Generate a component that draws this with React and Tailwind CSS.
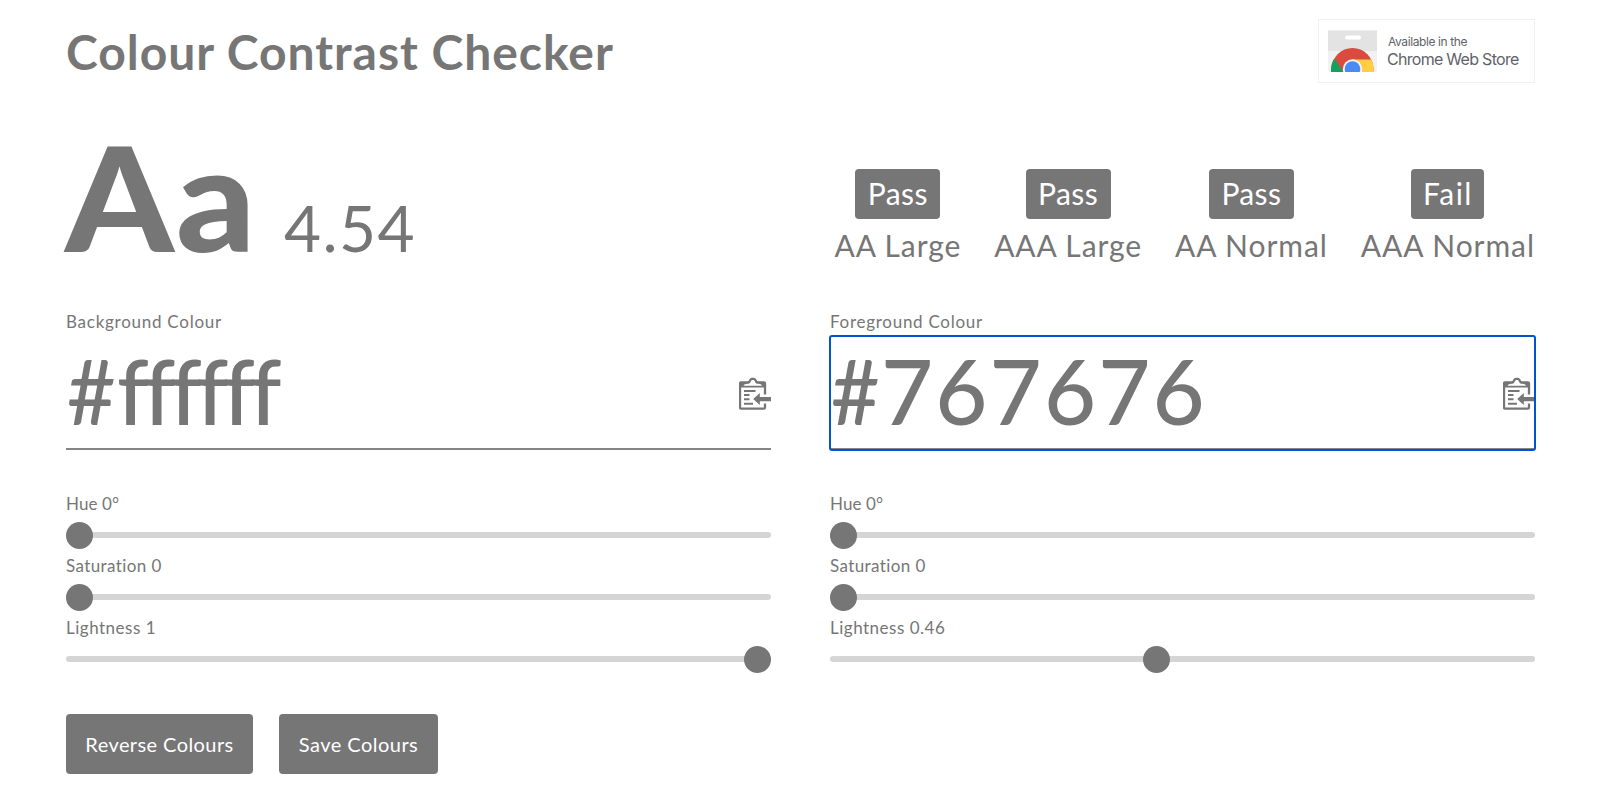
function PasteIcon() {
  return (
    <svg className="mt-[3px] -mb-px h-[34px] w-8" viewBox="0 0 32 34" fill="none" stroke="currentColor">
      <path d="M26 19V6.5a1.2 1.2 0 0 0-1.2-1.2H2.2A1.2 1.2 0 0 0 1 6.500V30.500a1.200 1.200 0 0 0 1.200 1.200H24.800a1.200 1.200 0 0 0 1.200-1.200V26.500" strokeWidth="2.300" />
      <path d="M1 5H7.500C9.500 5 9.500 3.800 10.200 2.800C11.200.2 16.500.2 17.500 2.800C18.200 3.800 18.200 5 20 5H26.500V10.400H1Z" fill="currentColor" stroke="none" />
      <path d="M4.500 8.800C4.800 7.500 6.500 6.800 8.500 6.800C10.600 6.800 11.500 5.600 11.900 4.200C12.400 2.600 15.300 2.600 15.800 4.200C16.200 5.600 17.100 6.800 19.200 6.800C21.200 6.800 22.700 7.500 23 8.800Z" fill="white" stroke="none" />
      <path d="M5 13.900h11.500M5 17.900h5.500M5 22.200h5.500M5 26.800h9" strokeWidth="2" />
      <rect x="24.500" y="17.500" width="4" height="8.400" fill="white" stroke="none" />
      <path d="M14.200 22L20.800 15.900V20H32V24.200H20.800V28.100Z" fill="currentColor" stroke="none" />
    </svg>
  );
}

function StoreLogo() {
  return (
    <svg className="h-[43px] w-[49px]" viewBox="0 0 49 43">
      <path d="M0 .5h49V40a2 2 0 0 1-2 2H2a2 2 0 0 1-2-2Z" fill="#f1f1f1" />
      <path d="M0 .5h49V21H0Z" fill="#e3e3e3" />
      <rect x="17" y="5.500" width="16" height="4" rx="2" fill="#fff" />
      <clipPath id="bag"><path d="M0 0h49V42H0Z" /></clipPath>
      <g clipPath="url(#bag)">
        <circle cx="24.500" cy="39" r="21" fill="#db4a3f" />
        <path d="M6.300 28.500L16.500 43H3V39C3 35 4.400 31.500 6.300 28.500Z" fill="#17a05d" />
        <path d="M24.500 29.500H43.200C45 33 45.500 36 45.500 39V43H24.500Z" fill="#ffce43" />
        <circle cx="24.500" cy="39" r="9.700" fill="#f4f4f4" />
        <circle cx="24.500" cy="39" r="7.800" fill="#4a8af4" />
      </g>
    </svg>
  );
}

function Result({ verdict, label, tracking, badge }) {
  return (
    <div className="flex flex-col items-center">
      <span className={`flex h-[50px] items-center justify-center rounded-[4px] bg-[#767676] pb-px text-[30px] text-white ${badge}`}>{verdict}</span>
      <span className={`mt-[8px] whitespace-nowrap leading-9 ${tracking}`}>{label}</span>
    </div>
  );
}

function Slider({ label, at, tracking }) {
  return (
    <div className="flex h-[62px] flex-col">
      <span className={`text-[17px] leading-6 ${tracking}`}>{label}</span>
      <div className="relative mt-[6px] flex h-[27px] items-center">
        <div className="mb-px h-1.5 w-full rounded-full bg-[#d5d5d5]" />
        <div className="absolute top-0 size-[27px] rounded-full bg-[#767676]" style={{ left: `${at * 678}px` }} />
      </div>
    </div>
  );
}

function ColourPanel({ title, titleTracking, value, valueTracking, focused, lightness, lightnessAt }) {
  return (
    <section className="w-[705px]">
      <div className={`text-[17px] leading-6 ${titleTracking}`}>{title}</div>
      <div className={`mt-[2px] flex h-[114px] items-center justify-between border-b-2 border-[#858585] ${focused ? "rounded-[2px] outline-2 -outline-offset-1 outline-[#0054d1]" : ""}`}>
        <div className="flex h-full items-start pl-[1px] text-[90px] font-medium leading-[109px]">
          <span className="w-[50px] origin-left scale-x-[0.93]">#</span>
          <span className={valueTracking}>{value}</span>
        </div>
        <PasteIcon />
      </div>
      <div className="mt-[42px]">
        <Slider label="Hue 0°" at={0} tracking="tracking-[0.1px]" />
        <Slider label="Saturation 0" at={0} tracking="tracking-[0.4px]" />
        <Slider label={lightness} at={lightnessAt} tracking="tracking-[0.5px]" />
      </div>
    </section>
  );
}

export default function App() {
  return (
    <main className="h-[802px] w-[1600px] overflow-hidden bg-white pl-[66px] pr-[65px] pt-[19px] font-['Lato',sans-serif] text-[#767676]">
      <header className="flex h-16 items-start justify-between">
        <h1 className="mt-[5px] text-[48px] font-bold leading-[56px] tracking-[0.97px]">Colour Contrast Checker</h1>
        <div className="flex h-16 w-[217px] items-center border border-[#f0f0f0] pl-[9px] font-['Inter',sans-serif] text-[#5f6368]">
          <StoreLogo />
          <div className="ml-[10px] flex flex-col">
            <span className="ml-px text-[12px] leading-4 tracking-[-0.4px]">Available in the</span>
            <span className="text-[16px] leading-[18px] tracking-[-0.71px]">Chrome Web Store</span>
          </div>
        </div>
      </header>

      <div className="mt-10 flex h-[187px] justify-between">
        <div className="mt-px flex items-baseline">
          <span className="-ml-px w-[219px] origin-left scale-x-[1.07] text-[145px] font-black leading-none tracking-[2px]">Aa</span>
          <span className="text-[64px] leading-none tracking-[1.4px]">4.54</span>
        </div>
        <div className="mt-[46px] flex gap-[33px] text-[30px]">
          <Result verdict="Pass" label="AA Large" tracking="tracking-[0.9px]" badge="w-[85px] tracking-[0.4px]" />
          <Result verdict="Pass" label="AAA Large" tracking="tracking-[0.9px]" badge="w-[85px] tracking-[0.4px]" />
          <Result verdict="Pass" label="AA Normal" tracking="tracking-[0.95px]" badge="w-[85px] tracking-[0.4px]" />
          <Result verdict="Fail" label="AAA Normal" tracking="tracking-[0.95px]" badge="w-[73px] tracking-[1.4px]" />
        </div>
      </div>

      <div className="flex justify-between">
        <ColourPanel title="Background Colour" titleTracking="tracking-[0.74px]" value="ffffff" valueTracking="tracking-[-5.2px]" lightness="Lightness 1" lightnessAt={1} />
        <ColourPanel title="Foreground Colour" titleTracking="tracking-[0.72px]" value="767676" valueTracking="tracking-[2.1px]" focused lightness="Lightness 0.46" lightnessAt={0.462} />
      </div>

      <div className="mt-[36px] flex gap-[26px] text-[20px] text-white">
        <button className="h-[60px] w-[187px] rounded-[4px] bg-[#767676] pb-px tracking-[0.42px]">Reverse Colours</button>
        <button className="h-[60px] w-[159px] rounded-[4px] bg-[#767676] pb-px tracking-[0.48px]">Save Colours</button>
      </div>
    </main>
  );
}
